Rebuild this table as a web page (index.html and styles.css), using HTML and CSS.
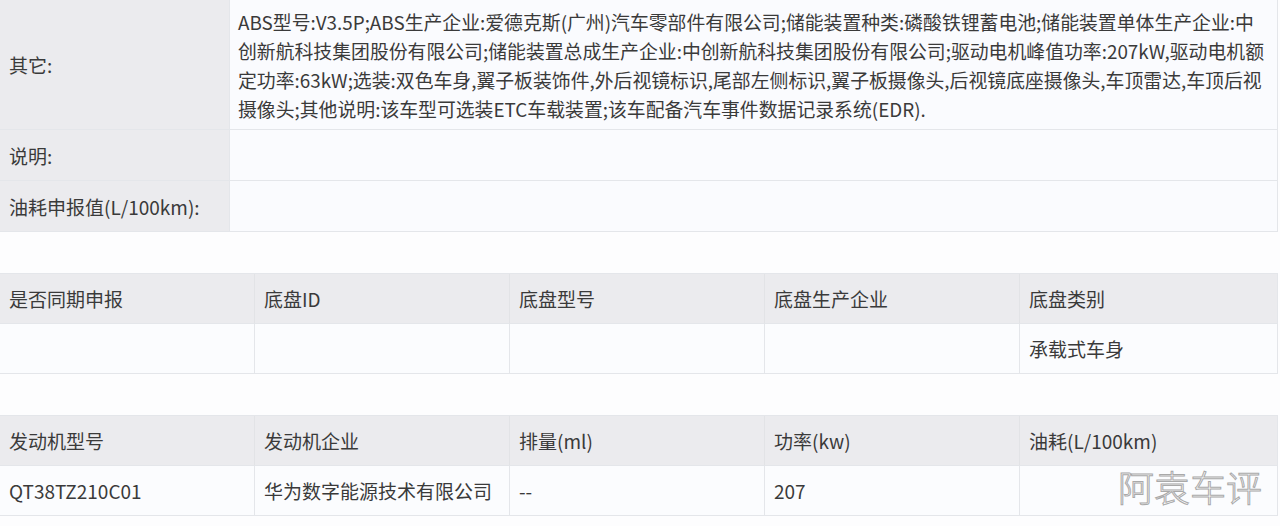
FILE: index.html
```html
<!DOCTYPE html>
<html lang="zh-CN">
<head>
<meta charset="utf-8">
<title>车型参数</title>
<link rel="stylesheet" href="styles.css">
</head>
<body>
<div class="page">
  <div class="info">
    <div class="row row-tall">
      <div class="label">其它:</div>
      <div class="value">ABS型号:V3.5P;ABS生产企业:爱德克斯(广州)汽车零部件有限公司;储能装置种类:磷酸铁锂蓄电池;储能装置单体生产企业:中<br>创新航科技集团股份有限公司;储能装置总成生产企业:中创新航科技集团股份有限公司;驱动电机峰值功率:207kW,驱动电机额<br>定功率:63kW;选装:双色车身,翼子板装饰件,外后视镜标识,尾部左侧标识,翼子板摄像头,后视镜底座摄像头,车顶雷达,车顶后视<br>摄像头;其他说明:该车型可选装ETC车载装置;该车配备汽车事件数据记录系统(EDR).</div>
    </div>
    <div class="row">
      <div class="label">说明:</div>
      <div class="value"></div>
    </div>
    <div class="row">
      <div class="label">油耗申报值(L/100km):</div>
      <div class="value"></div>
    </div>
  </div>

  <div class="grid grid-chassis">
    <div class="cell head">是否同期申报</div>
    <div class="cell head">底盘ID</div>
    <div class="cell head">底盘型号</div>
    <div class="cell head">底盘生产企业</div>
    <div class="cell head">底盘类别</div>
    <div class="cell"></div>
    <div class="cell"></div>
    <div class="cell"></div>
    <div class="cell"></div>
    <div class="cell">承载式车身</div>
  </div>

  <div class="grid grid-engine">
    <div class="cell head">发动机型号</div>
    <div class="cell head">发动机企业</div>
    <div class="cell head">排量(ml)</div>
    <div class="cell head">功率(kw)</div>
    <div class="cell head">油耗(L/100km)</div>
    <div class="cell">QT38TZ210C01</div>
    <div class="cell">华为数字能源技术有限公司</div>
    <div class="cell">--</div>
    <div class="cell">207</div>
    <div class="cell"></div>
  </div>

  <div class="watermark">阿袁车评</div>
</div>
</body>
</html>
```

FILE: styles.css
```css
html, body {
  margin: 0;
  padding: 0;
  background: #fdfdfe;
}

body {
  font-family: "Noto Sans CJK SC", "Noto Sans", sans-serif;
  font-size: 19px;
  color: #3a3a3a;
  width: 1280px;
  height: 526px;
  overflow: hidden;
}

.page {
  position: relative;
  width: 1278px;
}

.info {
  display: flex;
  flex-direction: column;
  border-right: 1px solid #e4e6ea;
}

.row {
  display: grid;
  grid-template-columns: 230px 1fr;
  height: 50px;
  border-bottom: 1px solid #e4e6ea;
}

.row-tall {
  height: 129px;
}

.label {
  background: #ebebee;
  padding-left: 9px;
  display: flex;
  align-items: center;
  border-right: 1px solid #e4e6ea;
  white-space: nowrap;
}

.value {
  background: #fafbfe;
  padding: 7px 0 0 8px;
  font-size: 18.85px;
  line-height: 29px;
  white-space: nowrap;
}

.grid {
  display: grid;
  grid-template-columns: 255px 255px 255px 255px 1fr;
  grid-auto-rows: 50px;
  border-top: 1px solid #e4e6ea;
  border-right: 1px solid #e4e6ea;
}

.grid-chassis {
  margin-top: 41px;
}

.grid-engine {
  margin-top: 41px;
}

.cell {
  display: flex;
  align-items: center;
  padding-left: 9px;
  background: #fbfcfe;
  border-bottom: 1px solid #e4e6ea;
  border-right: 1px solid #e4e6ea;
  white-space: nowrap;
}

.cell:nth-child(5n) {
  border-right: none;
}

.cell.head {
  background: #ebebee;
  border-right-color: #e2e3e6;
}

.watermark {
  position: absolute;
  left: 1118px;
  top: 468px;
  font-family: "Noto Sans CJK SC", sans-serif;
  font-weight: 300;
  font-size: 36px;
  color: #ffffff;
  -webkit-text-stroke: 1px #a9a9a9;
  line-height: 1;
}
```
